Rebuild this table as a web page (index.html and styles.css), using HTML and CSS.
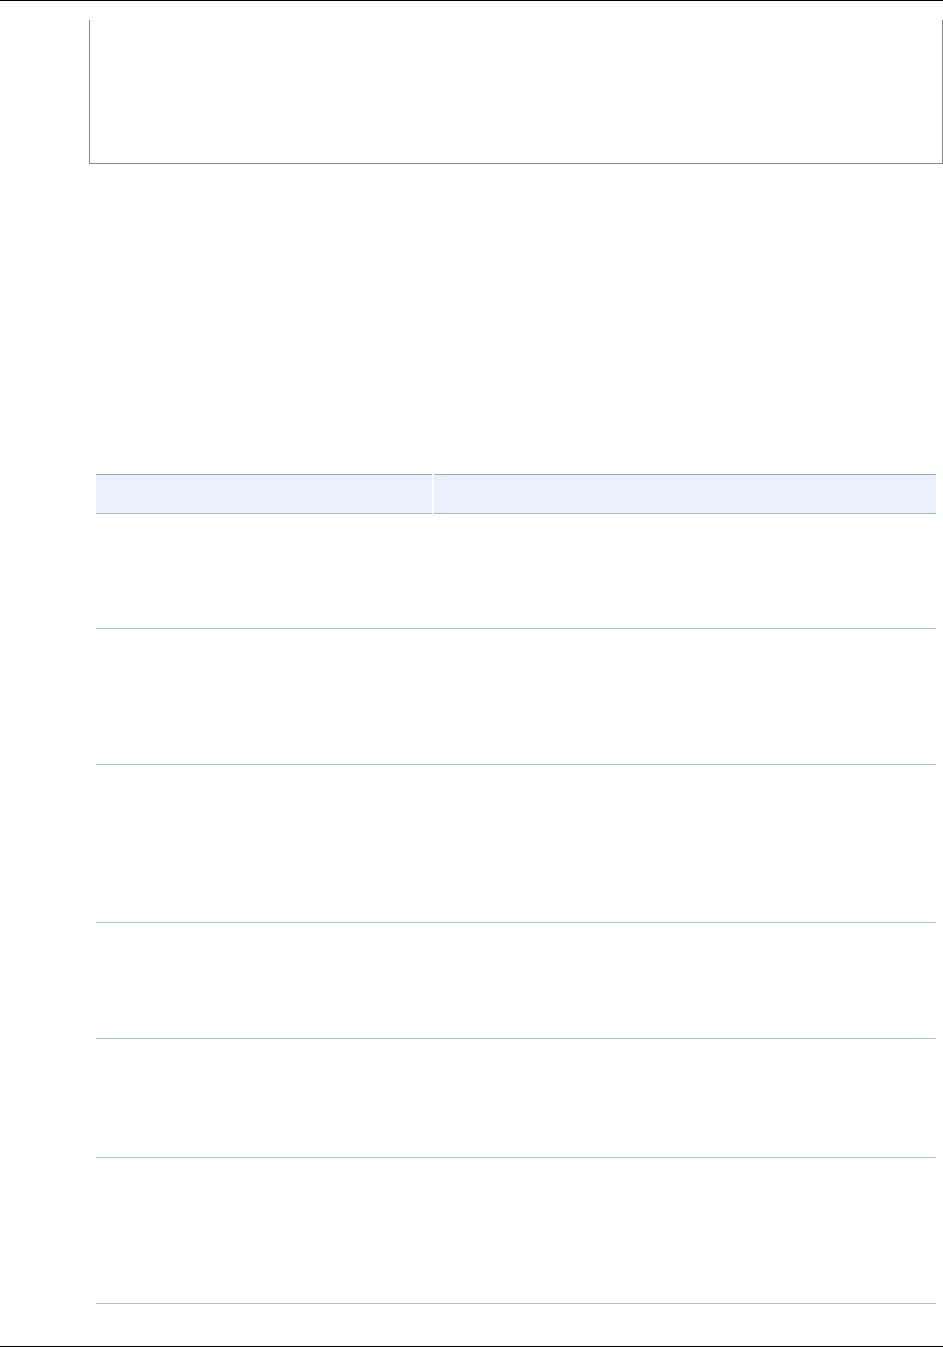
FILE: index.html
```html
<!DOCTYPE html>
<html>
<head>
<meta charset="utf-8">
<link rel="stylesheet" href="styles.css">
</head>
<body>
<div class="page">
  <div class="top-rule"></div>
  <div class="code-box"></div>
  <table class="data-table">
    <thead>
      <tr><th class="col-a"></th><th class="col-b"></th></tr>
    </thead>
    <tbody>
      <tr class="r1"><td></td><td></td></tr>
      <tr class="r2"><td></td><td></td></tr>
      <tr class="r3"><td></td><td></td></tr>
      <tr class="r4"><td></td><td></td></tr>
      <tr class="r5"><td></td><td></td></tr>
      <tr class="r6"><td></td><td></td></tr>
    </tbody>
  </table>
  <div class="spacer"></div>
  <div class="bottom-rule"></div>
</div>
</body>
</html>
```
FILE: styles.css
```css
html, body {
  margin: 0;
  padding: 0;
  background: #fff;
  font-family: "Liberation Sans", Arial, sans-serif;
}
.page {
  width: 943px;
  height: 1347px;
  display: flex;
  flex-direction: column;
}
.top-rule {
  height: 1px;
  background: #000;
  flex: none;
}
.code-box {
  flex: none;
  margin: 19px 0 0 89px;
  width: 854px;
  height: 144px;
  box-sizing: border-box;
  border-left: 1px solid #888;
  border-right: 1px solid #888;
  border-bottom: 1px solid #888;
}
.data-table {
  flex: none;
  margin: 310px 0 0 96px;
  width: 840px;
  border-collapse: collapse;
  table-layout: fixed;
}
.data-table th {
  height: 38px;
  padding: 0;
  background: #eaf1fc;
  border-top: 1px solid #9aabab;
  border-bottom: 1px solid #a9b9bb;
}
.data-table th.col-a {
  width: 336px;
  border-right: 2px solid #fbfdff;
}
.data-table td {
  padding: 0;
  border-bottom: 1px solid #b3c2bf;
}
.r1 td { height: 114px; }
.r2 td { height: 135px; }
.r3 td { height: 157px; }
.r4 td { height: 115px; }
.r5 td { height: 118px; }
.r6 td { height: 145px; }
.spacer { flex: 1; }
.bottom-rule {
  flex: none;
  height: 1px;
  background: #000;
}
```
